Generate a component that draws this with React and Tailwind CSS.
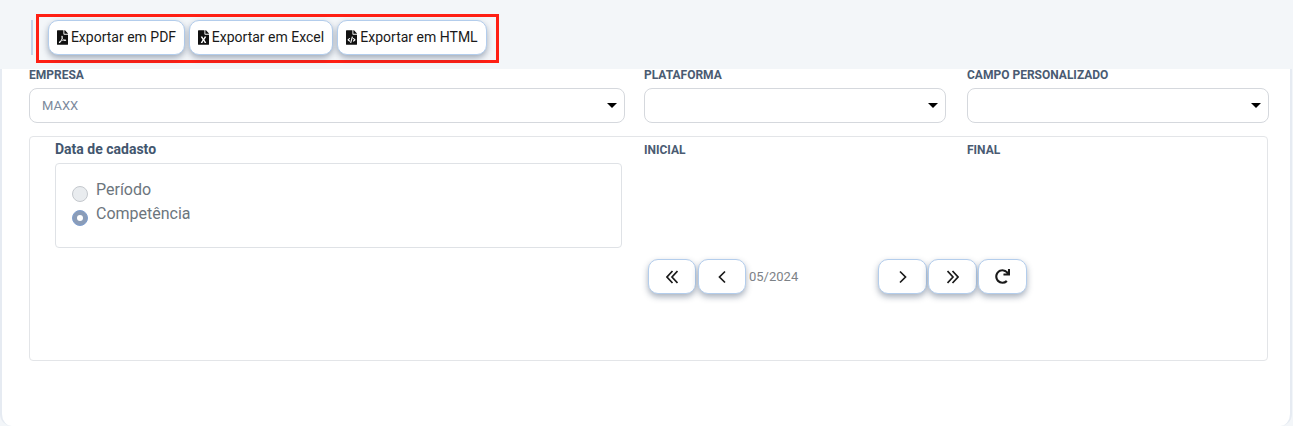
import React from "react";
import { FaFilePdf, FaFileExcel, FaFileCode, FaRedo } from "react-icons/fa";

const font = "font-['Roboto','Liberation_Sans',sans-serif]";

function Chevron({ points, width, height }) {
  return (
    <svg width={width} height={height} viewBox={`0 0 ${width} ${height}`} fill="none" stroke="currentColor" strokeWidth="1.7">
      {points.map((p) => (
        <polyline key={p} points={p} />
      ))}
    </svg>
  );
}

function ExportButton({ icon: Icon, label, width }) {
  return (
    <button className={`flex h-[35px] items-center justify-center gap-[3px] rounded-[10px] border border-[#b3cdec] bg-white text-[14px] text-[#1a1a1a] shadow-[0_3px_6px_rgba(40,60,90,0.4)] ${width}`}>
      <Icon className="mb-[1px] h-[15px] w-[11px] text-[#111]" />
      <span>{label}</span>
    </button>
  );
}

function NavButton({ children, width = "w-[49px]" }) {
  return (
    <button className={`flex h-[35px] items-center justify-center rounded-[10px] border border-[#b3cdec] bg-white text-[#1a1a1a] shadow-[0_3px_6px_rgba(40,60,90,0.4)] ${width}`}>
      {children}
    </button>
  );
}

function Label({ children }) {
  return <div className="text-[12px] font-bold leading-[12px] text-[#4a5b72]">{children}</div>;
}

function Select({ value, width }) {
  return (
    <div className={`mt-[7px] flex h-[35px] items-center justify-between rounded-[8px] border border-[#d5d8dd] bg-white pl-[12px] pr-[7px] text-[13px] text-[#7b8a9c] ${width}`}>
      <span>{value}</span>
      <span className="h-0 w-0 border-x-[5px] border-t-[5px] border-x-transparent border-t-black" />
    </div>
  );
}

function Radio({ checked, label }) {
  return (
    <div className="flex h-[24px] items-start gap-[8px]">
      <span className={`mt-[6px] flex h-[16px] w-[16px] items-center justify-center rounded-full border ${checked ? "border-[#7f9fd0] bg-[#8a9cb8]" : "border-[#c4c8cd] bg-[#e9ecef]"}`}>
        {checked && <span className="h-[6px] w-[6px] rounded-full bg-white" />}
      </span>
      <span className="text-[16px] leading-[20px] text-[#6c757d]">{label}</span>
    </div>
  );
}

export default function App() {
  return (
    <div className={`${font} h-[426px] w-[1293px] overflow-hidden bg-[#f3f6f9]`}>
      <div className="flex h-[69px] items-start pl-[31px] pt-[14px]">
        <div className="mt-[6px] h-[35px] w-[2px] bg-[#c3d4ea]" />
        <div className="ml-[3px] flex h-[49px] w-[463px] gap-[4px] border-[3px] border-[#ff1f14] pl-[9px] pt-[3px]">
          <ExportButton icon={FaFilePdf} label="Exportar em PDF" width="w-[137px]" />
          <ExportButton icon={FaFileExcel} label="Exportar em Excel" width="w-[144px]" />
          <ExportButton icon={FaFileCode} label="Exportar em HTML" width="w-[150px]" />
        </div>
      </div>

      <div className="mr-[1px] h-[357px] rounded-b-[12px] border-x-2 border-[#e6ebf2] bg-white pl-[27px]">
        <div className="grid grid-cols-[615px_323px_302px]">
          <div>
            <Label>EMPRESA</Label>
            <Select value="MAXX" width="w-[596px]" />
          </div>
          <div>
            <Label>PLATAFORMA</Label>
            <Select value="" width="w-[302px]" />
          </div>
          <div>
            <Label>CAMPO PERSONALIZADO</Label>
            <Select value="" width="w-[302px]" />
          </div>
        </div>

        <div className="mt-[13px] grid h-[225px] w-[1239px] grid-cols-[614px_323px_1fr] rounded-[4px] border border-[#e3e5e8] pt-[5px]">
          <div className="pl-[25px]">
            <div className="text-[14px] font-bold leading-[14px] text-[#43566e]">Data de cadasto</div>
            <div className="mt-[7px] h-[85px] w-[567px] rounded-[4px] border border-[#dfe2e6] pl-[16px] pt-[16px]">
              <Radio label="Período" />
              <Radio checked label="Competência" />
            </div>
          </div>
          <div className="col-span-2 pt-[2px]">
            <div className="grid grid-cols-[323px_1fr]">
              <Label>INICIAL</Label>
              <Label>FINAL</Label>
            </div>
            <div className="ml-[4px] mt-[103px] flex items-center">
              <div className="flex gap-[2px]">
                <NavButton width="w-[48px]">
                  <Chevron width={12} height={14} points={["6.5,1 1,7 6.5,13", "11.5,1 6,7 11.5,13"]} />
                </NavButton>
                <NavButton width="w-[48px]">
                  <Chevron width={8} height={14} points={["7,1.5 1.5,7 7,12.5"]} />
                </NavButton>
              </div>
              <span className="ml-[3px] w-[129px] text-[13px] text-[#7d8287]">05/2024</span>
              <div className="flex gap-[1px]">
                <NavButton>
                  <Chevron width={8} height={14} points={["1,1.5 6.5,7 1,12.5"]} />
                </NavButton>
                <NavButton>
                  <Chevron width={12} height={14} points={["0.5,1 6,7 0.5,13", "5.5,1 11,7 5.5,13"]} />
                </NavButton>
                <NavButton><FaRedo size={15} /></NavButton>
              </div>
            </div>
          </div>
        </div>
      </div>
    </div>
  );
}
